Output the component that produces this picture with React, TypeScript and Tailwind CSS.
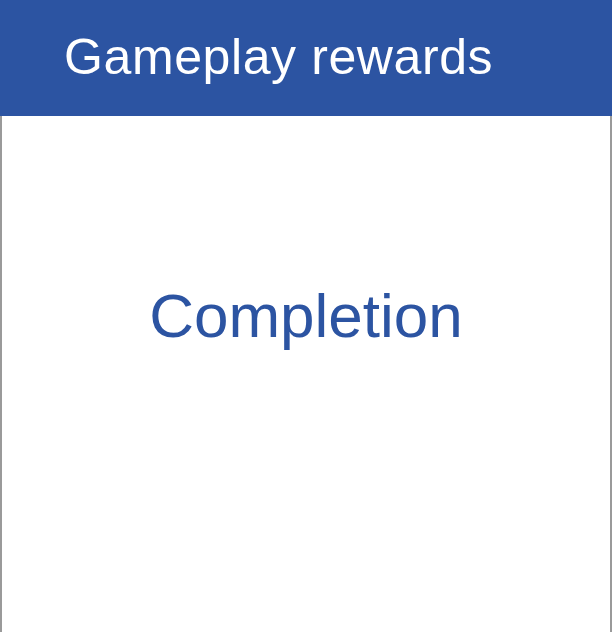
export default function App() {
  return (
    <div
      className="w-[612px] h-[632px] flex flex-col bg-white"
      style={{ fontFamily: '"Liberation Sans", Arial, sans-serif' }}
    >
      {/* Header */}
      <header className="h-[116px] shrink-0 bg-[#2c54a2] pl-[64px] pt-[29px]">
        <h1 className="text-[50px] leading-[57px] tracking-[0.6px] text-white font-normal">
          Gameplay rewards
        </h1>
      </header>

      {/* Body */}
      <main className="flex-1 border-x-2 border-[#9a9a9a] pt-[164px] flex justify-center">
        <p className="text-[62px] leading-[71px] text-[#2c54a2]">Completion</p>
      </main>
    </div>
  );
}
